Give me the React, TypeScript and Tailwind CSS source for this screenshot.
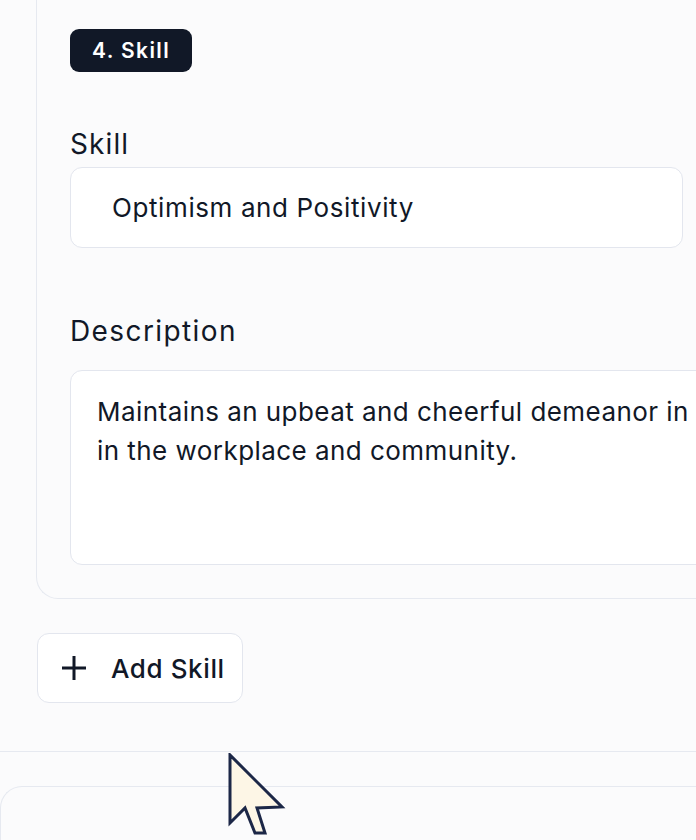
function Cursor() {
  return (
    <svg width="60" height="86" viewBox="0 0 60 86" className="absolute left-[228px] top-[753px]">
      <polygon
        points="2,2 2,70 17,55 27,80 37,80 29,55 54,54"
        fill="#fdf6e6"
        stroke="#1c2747"
        strokeWidth="3"
        strokeLinejoin="miter"
      />
    </svg>
  );
}

function PlusIcon() {
  return (
    <svg width="24" height="24" viewBox="0 0 24 24" className="shrink-0">
      <path d="M0 12h24M12 0v24" stroke="#111827" strokeWidth="3" />
    </svg>
  );
}

export default function App() {
  return (
    <div className="relative h-[840px] w-[696px] overflow-hidden bg-[#fbfbfc] font-['Inter',sans-serif] text-[#111827]">
      <div className="w-[760px] border-b border-[#e6e9f0] pb-[48px]">
        <div className="ml-[36px] w-[760px] rounded-bl-[22px] border-b border-l border-[#e6e9f0] pb-[33px] pl-[33px] pt-[29px]">
          <span className="inline-flex h-[43px] items-center rounded-[9px] bg-[#111827] px-[22px] text-[21px] font-semibold tracking-[1.4px] text-white">
            4. Skill
          </span>

          <div className="mt-[52px] text-[28px] leading-[40px] tracking-[1.1px]">Skill</div>
          <div className="mt-[3px] flex h-[81px] w-[613px] items-center rounded-[12px] border border-[#e3e6ee] bg-white pl-[41px] text-[26px] tracking-[0.6px]">
            Optimism and Positivity
          </div>

          <div className="mt-[63px] text-[28px] leading-[40px] tracking-[1.4px]">Description</div>
          <div className="mt-[19px] h-[195px] w-[700px] rounded-[12px] border border-[#e3e6ee] bg-white pl-[26px] pt-[21px] text-[26px] leading-[39px] tracking-[0.45px]">
            <div className="whitespace-nowrap">Maintains an upbeat and cheerful demeanor in</div>
            <div className="whitespace-nowrap">in the workplace and community.</div>
          </div>
        </div>

        <button
          type="button"
          className="ml-[37px] mt-[34px] flex h-[70px] items-center gap-[25px] rounded-[12px] border border-[#e3e6ee] bg-white pl-[24px] pr-[17px] text-[26px] font-medium tracking-[0.6px]"
        >
          <PlusIcon />
          Add Skill
        </button>
      </div>

      <div className="mt-[34px] h-[100px] w-[760px] rounded-tl-[22px] border-l border-t border-[#e6e9f0]" />

      <Cursor />
    </div>
  );
}
